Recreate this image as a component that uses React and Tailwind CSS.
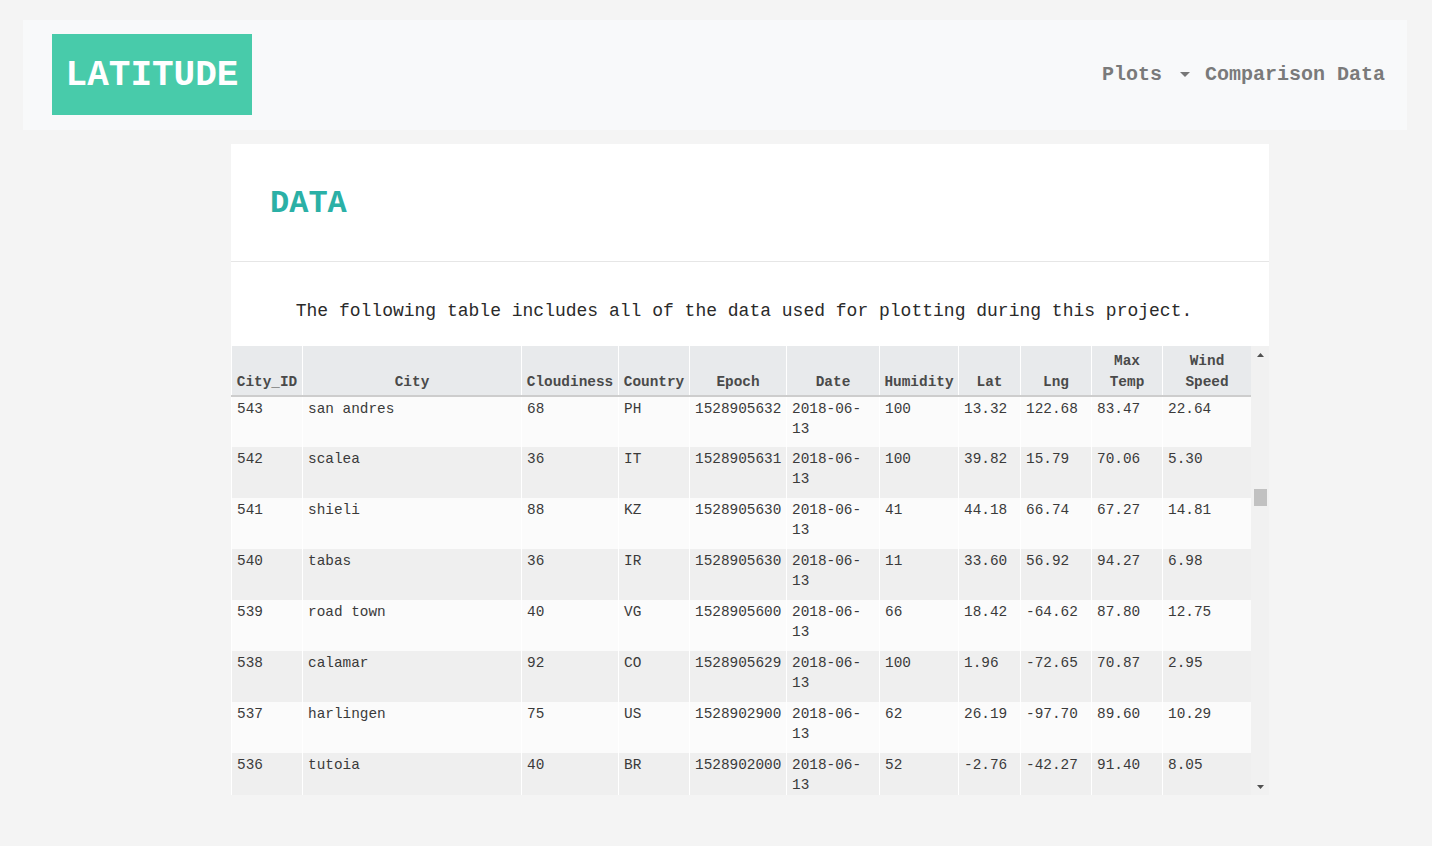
import React from "react";

const rows = [
  ["543", "san andres", "68", "PH", "1528905632", "100", "13.32", "122.68", "83.47", "22.64"],
  ["542", "scalea", "36", "IT", "1528905631", "100", "39.82", "15.79", "70.06", "5.30"],
  ["541", "shieli", "88", "KZ", "1528905630", "41", "44.18", "66.74", "67.27", "14.81"],
  ["540", "tabas", "36", "IR", "1528905630", "11", "33.60", "56.92", "94.27", "6.98"],
  ["539", "road town", "40", "VG", "1528905600", "66", "18.42", "-64.62", "87.80", "12.75"],
  ["538", "calamar", "92", "CO", "1528905629", "100", "1.96", "-72.65", "70.87", "2.95"],
  ["537", "harlingen", "75", "US", "1528902900", "62", "26.19", "-97.70", "89.60", "10.29"],
  ["536", "tutoia", "40", "BR", "1528902000", "52", "-2.76", "-42.27", "91.40", "8.05"],
];

const td = "align-top px-[5px] pt-[2px] pb-0 border-x border-white text-left";
const th = "align-bottom px-[4px] pt-[5px] pb-[2px] border-x border-white text-center font-bold";

export default function App() {
  return (
    <div className="min-h-[846px] bg-[#f4f4f4] pt-[20px] pl-[23px] pr-[25px] font-['Liberation_Mono','Courier_New',monospace] text-[#222]">
      <nav className="h-[110px] bg-[#f8f9fa] flex items-start justify-between pl-[29px] pr-[22px] pt-[14px]">
        <div className="w-[200px] h-[81px] bg-[#48cbaa] flex items-center justify-center text-white font-bold text-[36px] leading-none pt-[2px]">
          LATITUDE
        </div>
        <div className="h-[81px] flex items-center text-[20px] font-bold text-[#7a7a7a] pt-[1px]">
          <span>Plots</span>
          <svg className="ml-[18px] mr-[15px] mb-[2px]" width="10" height="5" viewBox="0 0 10 5">
            <polygon points="0,0 10,0 5,5" fill="#777777" />
          </svg>
          <span>Comparison Data</span>
        </div>
      </nav>

      <main className="mt-[14px] ml-[208px] w-[1038px] bg-white">
        <div className="h-[118px] border-b border-[#e6e6e6] flex items-center pl-[39px] pt-[3px]">
          <h1 className="text-[32px] font-bold text-[#2bb0a6] leading-none">DATA</h1>
        </div>
        <div className="h-[84px] pt-[36px] text-center pr-[12px]">
          <p className="text-[18px] leading-[26px] text-[#2a2a2a]">
            The following table includes all of the data used for plotting during this project.
          </p>
        </div>
        <div className="flex h-[449px] bg-[#f4f4f4]">
          <div className="w-[1020px] h-[449px] overflow-hidden">
            <table className="table-fixed w-[1020px] border-collapse text-[14.4px] leading-[21px] text-[#3a3a3a]">
              <thead>
                <tr className="bg-[#e8eaec] text-[#4a4a4a] border-b-2 border-[#cdcdcd]">
                  <th className={`${th} w-[71px]`}>City_ID</th>
                  <th className={`${th} w-[219px]`}>City</th>
                  <th className={`${th} w-[97px]`}>Cloudiness</th>
                  <th className={`${th} w-[71px]`}>Country</th>
                  <th className={`${th} w-[97px]`}>Epoch</th>
                  <th className={`${th} w-[93px]`}>Date</th>
                  <th className={`${th} w-[79px]`}>Humidity</th>
                  <th className={`${th} w-[62px]`}>Lat</th>
                  <th className={`${th} w-[71px]`}>Lng</th>
                  <th className={`${th} w-[71px]`}>Max<br />Temp</th>
                  <th className={`${th} w-[89px]`}>Wind<br />Speed</th>
                </tr>
              </thead>
              <tbody className="leading-[20px]">
                {rows.map((r, i) => (
                  <tr key={r[0]} className={`h-[51px] ${i % 2 === 0 ? "bg-[#fbfbfb]" : "bg-[#efefef]"}`}>
                    <td className={td}>{r[0]}</td>
                    <td className={td}>{r[1]}</td>
                    <td className={td}>{r[2]}</td>
                    <td className={td}>{r[3]}</td>
                    <td className={td}>{r[4]}</td>
                    <td className={td}>2018-06-<br />13</td>
                    <td className={td}>{r[5]}</td>
                    <td className={td}>{r[6]}</td>
                    <td className={td}>{r[7]}</td>
                    <td className={td}>{r[8]}</td>
                    <td className={td}>{r[9]}</td>
                  </tr>
                ))}
              </tbody>
            </table>
          </div>
          <div className="w-[18px] h-[449px] bg-[#f1f1f1] flex flex-col">
            <div className="h-[17px] flex items-center justify-center">
              <svg width="7" height="4" viewBox="0 0 7 4">
                <polygon points="0,4 7,4 3.5,0" fill="#505050" />
              </svg>
            </div>
            <div className="h-[126px]" />
            <div className="h-[17px] ml-[3px] mr-[2px] bg-[#c1c1c1]" />
            <div className="flex-1" />
            <div className="h-[17px] flex items-center justify-center">
              <svg width="7" height="4" viewBox="0 0 7 4">
                <polygon points="0,0 7,0 3.5,4" fill="#505050" />
              </svg>
            </div>
          </div>
        </div>
      </main>
    </div>
  );
}
